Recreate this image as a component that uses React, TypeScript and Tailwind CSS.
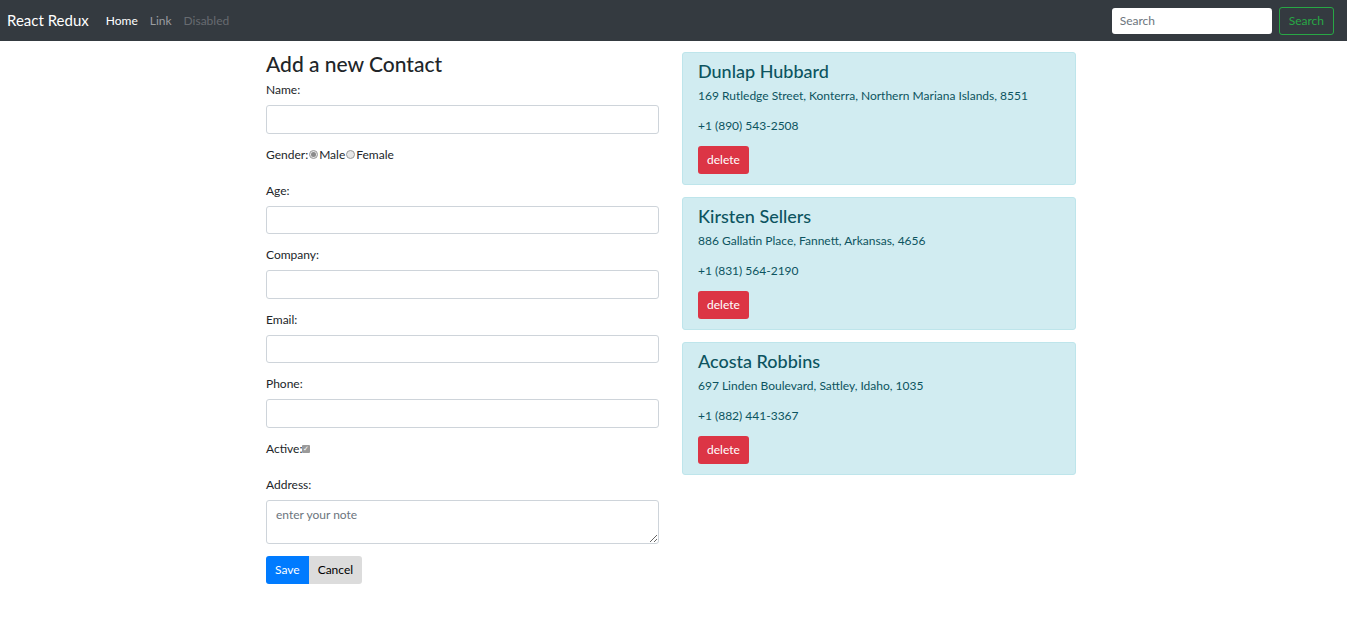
import React from 'react';

const contacts = [
  { id: 1, name: 'Dunlap Hubbard', address: '169 Rutledge Street, Konterra, Northern Mariana Islands, 8551', phone: '+1 (890) 543-2508' },
  { id: 2, name: 'Kirsten Sellers', address: '886 Gallatin Place, Fannett, Arkansas, 4656', phone: '+1 (831) 564-2190' },
  { id: 3, name: 'Acosta Robbins', address: '697 Linden Boulevard, Sattley, Idaho, 1035', phone: '+1 (882) 441-3367' },
];

const Field = ({ label }: { label: string }) => (
  <div className="mb-[12px]">
    <label className="block leading-[18px] pb-[6px]">{label}</label>
    <input type="text" className="block w-full h-[28.5px] bg-white border border-[#ced4da] rounded-[3px] px-[9px] outline-none" />
  </div>
);

const Radio = ({ checked }: { checked?: boolean }) => (
  <span className="inline-flex items-center justify-center w-[9px] h-[9px] rounded-full border border-[#9a9a9a] bg-[#e6e6e6] mx-[1px]">
    {checked && <span className="w-[5px] h-[5px] rounded-full bg-[#8a8a8a]" />}
  </span>
);

const App: React.FC = () => {
  return (
    <div className="min-h-screen bg-white text-[12px] text-[#212529] pr-[5px]" style={{ fontFamily: 'Lato, "Liberation Sans", sans-serif' }}>
      <nav className="h-[41px] bg-[#343a40] flex items-center px-[7px] -mr-[5px]">
        <span className="text-white text-[15px] mr-[17px]">React Redux</span>
        <a className="text-white mr-[12px]">Home</a>
        <a className="text-[#9a9da0] mr-[12px]">Link</a>
        <a className="text-[#676b70]">Disabled</a>
        <div className="ml-auto flex items-center gap-[7px] pr-[6px]">
          <input placeholder="Search" className="w-[160px] h-[26px] bg-white rounded-[3px] px-[8px] text-[12px] outline-none placeholder:text-[#6c757d]" />
          <button className="h-[28px] px-[9px] border border-[#28a745] text-[#28a745] rounded-[3px]">Search</button>
        </div>
      </nav>
      <main className="w-[810px] mx-auto pt-[10px] flex gap-[23px]">
        <div className="w-[393px]">
          <h3 className="text-[21px] font-medium leading-[25px] mb-[5px]">Add a new Contact</h3>
          <Field label="Name:" />
          <div className="mb-[12px]">
            <label className="flex items-center leading-[18px] pb-[6px]">
              Gender:<Radio checked />Male<Radio />Female
            </label>
          </div>
          <Field label="Age:" />
          <Field label="Company:" />
          <Field label="Email:" />
          <Field label="Phone:" />
          <div className="mb-[12px]">
            <label className="flex items-center leading-[18px] pb-[6px]">
              Active:
              <span className="inline-flex items-center justify-center w-[8px] h-[8px] rounded-[1px] bg-[#9a9a9a] text-white text-[7px] leading-none">✓</span>
            </label>
          </div>
          <div className="mb-[12px]">
            <label className="block leading-[18px] pb-[6px]">Address:</label>
            <textarea placeholder="enter your note" className="block w-full h-[44px] border border-[#ced4da] rounded-[3px] px-[9px] py-[5px] outline-none placeholder:text-[#6c757d]" />
          </div>
          <div className="flex">
            <button className="h-[28px] px-[9px] bg-[#007bff] text-white rounded-l-[3px]">Save</button>
            <button className="h-[28px] px-[9px] bg-[#dcdcdc] text-black rounded-r-[3px]">Cancel</button>
          </div>
        </div>
        <div className="w-[394px] flex flex-col gap-[12px] pt-[1px]">
          {contacts.map(c => (
            <div key={c.id} className="bg-[#d1ecf1] border border-[#bee5eb] rounded-[3px] text-[#0c5460] px-[15px] pt-[7px] pb-[10px]">
              <h4 className="text-[18px] font-medium leading-[22px]">{c.name}</h4>
              <p className="leading-[18px] mt-[5px]">{c.address}</p>
              <p className="leading-[18px] mt-[12px]">{c.phone}</p>
              <button className="mt-[11px] h-[28px] px-[9px] bg-[#dc3545] text-white rounded-[3px]">delete</button>
            </div>
          ))}
        </div>
      </main>
    </div>
  );
};

export default App;
